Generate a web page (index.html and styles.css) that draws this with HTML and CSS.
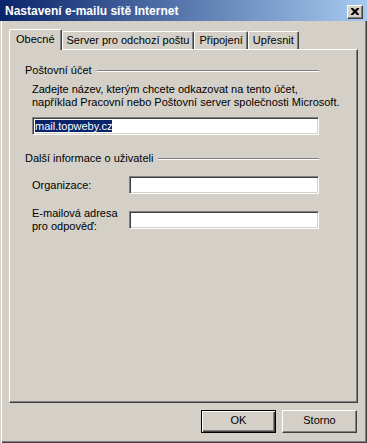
FILE: index.html
```html
<!DOCTYPE html>
<html lang="cs">
<head>
    <meta charset="UTF-8">
    <title>Nastavení e-mailu sítě Internet</title>
    <link rel="stylesheet" href="styles.css">
</head>
<body>
    <div class="window">
        <div class="titlebar">
            <span class="title">Nastavení e-mailu sítě Internet</span>
            <div class="close">
                <svg width="8" height="7" viewBox="0 0 8 7">
                    <path d="M0 0h2l2 2 2-2h2v1l-2.5 2.5 2.5 2.5v1h-2l-2-2-2 2h-2v-1l2.5-2.5-2.5-2.5z" fill="#000"/>
                </svg>
            </div>
        </div>

        <div class="tabs">
            <div class="tab active">Obecné</div>
            <div class="tab">Server pro odchozí poštu</div>
            <div class="tab">Připojení</div>
            <div class="tab">Upřesnit</div>
        </div>

        <div class="panel">
            <!-- Poštovní účet -->
            <div class="group">
                <div class="group-head"><span>Poštovní účet</span></div>
                <p class="desc">Zadejte název, kterým chcete odkazovat na tento účet,<br>například Pracovní nebo Poštovní server společnosti Microsoft.</p>
                <div class="field wide"><span class="sel">mail.topweby.cz</span></div>
            </div>

            <!-- Další informace -->
            <div class="group second">
                <div class="group-head"><span>Další informace o uživateli</span></div>
                <div class="row">
                    <label>Organizace:</label>
                    <div class="field"></div>
                </div>
                <div class="row two">
                    <label>E-mailová adresa<br>pro odpověď:</label>
                    <div class="field"></div>
                </div>
            </div>
        </div>

        <div class="buttons">
            <div class="btn default">OK</div>
            <div class="btn">Storno</div>
        </div>
    </div>
</body>
</html>
```

FILE: styles.css
```css
body {
    margin: 0;
    font-family: "Liberation Sans", Arial, sans-serif;
    font-size: 11px;
    line-height: 13px;
    color: #000;
}

.window {
    width: 367px;
    height: 443px;
    box-sizing: border-box;
    background-color: #D4D0C8;
    display: flex;
    flex-direction: column;
    box-shadow: inset 1px 1px #D4D0C8, inset 2px 2px #fff, inset -1px -1px #404040, inset -2px -2px #808080;
}

.titlebar {
    height: 21px;
    box-sizing: border-box;
    padding: 2px 4px 0 5px;
    display: flex;
    align-items: center;
    justify-content: space-between;
    background: linear-gradient(to right, #0A246A, #A6CAF0);
}

.title {
    color: #fff;
    font-weight: bold;
    font-size: 12px;
}

.close {
    width: 16px;
    height: 14px;
    box-sizing: border-box;
    background-color: #D4D0C8;
    border-top: 1px solid #fff;
    border-left: 1px solid #fff;
    border-right: 1px solid #404040;
    border-bottom: 1px solid #404040;
    box-shadow: inset -1px -1px #808080;
    display: flex;
    align-items: center;
    justify-content: center;
}

/* záložky */
.tabs {
    height: 20px;
    margin-top: 8px;
    padding-left: 9px;
    display: flex;
    align-items: flex-end;
    position: relative;
    z-index: 1;
}

.tab {
    height: 18px;
    box-sizing: border-box;
    padding: 0 4px;
    line-height: 16px;
    border-top: 1px solid #fff;
    border-left: 1px solid #fff;
    border-right: 1px solid #404040;
    border-radius: 2px 2px 0 0;
    box-shadow: inset -1px 0 #808080;
    white-space: nowrap;
}

.tab.active {
    height: 21px;
    margin-bottom: -1px;
    padding: 0 6px;
    line-height: 18px;
    background-color: #D4D0C8;
}

.panel {
    width: 349px;
    height: 354px;
    margin-left: 9px;
    box-sizing: border-box;
    padding: 14px 0 0 15px;
    border: 1px solid;
    border-color: #fff #404040 #404040 #fff;
    box-shadow: inset -1px -1px #808080;
}

.group {
    width: 294px;
}

.group.second {
    margin-top: 17px;
}

.group-head {
    display: flex;
    align-items: center;
}

.group-head::after {
    content: "";
    flex: 1;
    height: 1px;
    margin-left: 5px;
    background-color: #808080;
    border-bottom: 1px solid #fff;
}

.desc {
    margin: 6px 0 0 7px;
    white-space: nowrap;
}

.field {
    height: 18px;
    box-sizing: border-box;
    background-color: #fff;
    border-top: 1px solid #808080;
    border-left: 1px solid #808080;
    border-right: 1px solid #fff;
    border-bottom: 1px solid #fff;
    box-shadow: inset 1px 1px #404040, inset -1px -1px #D4D0C8;
    padding: 2px 0 0 2px;
    line-height: 13px;
}

.field.wide {
    margin: 8px 0 0 7px;
}

.sel {
    background-color: #0A246A;
    color: #fff;
}

.row {
    display: flex;
    align-items: center;
    margin: 11px 0 0 7px;
}

.row.two {
    margin-top: 13px;
}

.row label {
    width: 97px;
}

.row .field {
    flex: 1;
}

.buttons {
    margin-top: 7px;
    padding-right: 10px;
    display: flex;
    justify-content: flex-end;
    gap: 6px;
}

.btn {
    width: 75px;
    height: 23px;
    box-sizing: border-box;
    text-align: center;
    line-height: 19px;
    border-top: 1px solid #fff;
    border-left: 1px solid #fff;
    border-right: 1px solid #404040;
    border-bottom: 1px solid #404040;
    box-shadow: inset -1px -1px #808080;
}

.btn.default {
    border: 1px solid #000;
    box-shadow: inset 1px 1px #fff, inset -1px -1px #404040, inset -2px -2px #808080;
}
```
